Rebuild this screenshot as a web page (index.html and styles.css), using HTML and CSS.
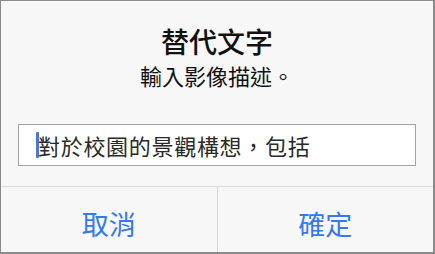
FILE: index.html
```
<!DOCTYPE html>
<html lang="zh-Hant">
<head>
<meta charset="utf-8">
<link rel="stylesheet" href="styles.css">
</head>
<body>
<div class="dialog">
  <div class="title">替代文字</div>
  <div class="subtitle">輸入影像描述。</div>
  <div class="field"><span class="caret"></span><span class="value">對於校園的景觀構想，包括</span></div>
  <div class="actions">
    <div class="btn">取消</div>
    <div class="sep"></div>
    <div class="btn">確定</div>
  </div>
</div>
</body>
</html>
```
FILE: styles.css
```
html, body { margin: 0; padding: 0; }
body { width: 435px; height: 254px; overflow: hidden; font-family: "Noto Sans CJK TC", "Noto Sans", sans-serif; }
.dialog {
  box-sizing: border-box;
  width: 435px; height: 254px;
  border: 1px solid #8a8a8a;
  border-right-width: 2px;
  border-bottom-width: 2px;
  background: #f7f7f7;
  display: flex; flex-direction: column;
}
.title {
  margin-top: 26px;
  font-size: 28px; line-height: 28px;
  font-weight: 500; color: #111;
  text-align: center;
}
.subtitle {
  margin-top: 9px;
  font-size: 22px; line-height: 22px;
  color: #111; text-align: center;
}
.field {
  margin: 38px 17px 0;
  box-sizing: border-box;
  height: 42px;
  border: 1px solid #a3a3a3;
  background: #fff;
  display: flex; align-items: center;
  padding-left: 17px;
}
.caret { width: 3px; height: 26px; background: #4f74d9; border-radius: 1px; margin-right: -1px; }
.value { font-size: 22px; line-height: 26px; color: #2a2a2a; letter-spacing: 0.7px; }
.actions {
  margin-top: 20px;
  border-top: 1px solid #d9d9de;
  flex: 1;
  display: flex;
}
.btn {
  flex: 1;
  display: flex; align-items: center; justify-content: center;
  padding-top: 8px;
  font-size: 27px; font-weight: 400; color: #3478f6;
}
.sep { width: 1px; background: #d3d3d9; }
```
